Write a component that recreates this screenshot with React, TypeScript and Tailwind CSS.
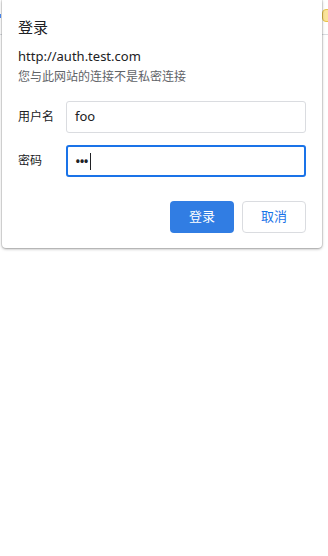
export default function App() {
  const cjk = { fontFamily: '"Segoe UI", "Noto Sans", "Noto Sans CJK SC", sans-serif' };
  return (
    <div className="relative h-[556px] w-[328px] overflow-hidden bg-white" style={cjk}>
      {/* browser chrome peeking behind the dialog */}
      <div className="absolute left-0 right-0 top-[34px] h-px bg-[#dadce0]" />
      <div className="absolute left-0 top-[14px] h-[4px] w-px bg-[#4a8af4]" />
      <div className="absolute left-[322px] top-[9px] h-[13px] w-[10px] rounded-sm border border-[#e8c44a] bg-[#fbe39a]" />

      <div className="relative ml-[2px] w-[320px] rounded-b-[4px] bg-white pb-[15px] shadow-[0_1px_3px_rgba(0,0,0,0.35),0_0_0_1px_rgba(0,0,0,0.08)]">
        <div className="px-4 pt-[17px]">
          <div className="text-[15px] leading-[20px] text-[#202124]">登录</div>
          <div className="mt-[10px] text-[13px] leading-[18px] text-[#202124]">http://auth.test.com</div>
          <div className="mt-[3px] text-[12px] leading-[18px] text-[#5f6368]">您与此网站的连接不是私密连接</div>

          <div className="mt-[15px] flex items-center">
            <div className="w-[48px] text-[12px] text-[#202124]">用户名</div>
            <div className="flex h-[32px] flex-1 items-center rounded-[3px] border border-[#dadce0] px-[8px] text-[13px] text-[#202124]">
              foo
            </div>
          </div>
          <div className="mt-[12px] flex items-center">
            <div className="w-[48px] text-[12px] text-[#202124]">密码</div>
            <div className="flex h-[32px] flex-1 items-center rounded-[3px] border-2 border-[#1a73e8] px-[7px] text-[#202124]">
              <span className="text-[15px] leading-none tracking-[-1.5px]">•••</span>
              <span className="ml-[3px] inline-block h-[17px] w-px bg-[#202124]" />
            </div>
          </div>

          <div className="mt-[24px] flex justify-end gap-[8px]">
            <button className="h-[32px] w-[64px] rounded-[4px] bg-[#317de3] text-[13px] text-white">登录</button>
            <button className="h-[32px] w-[64px] rounded-[4px] border border-[#dadce0] bg-white text-[13px] text-[#1a73e8]">取消</button>
          </div>
        </div>
      </div>
    </div>
  );
}
